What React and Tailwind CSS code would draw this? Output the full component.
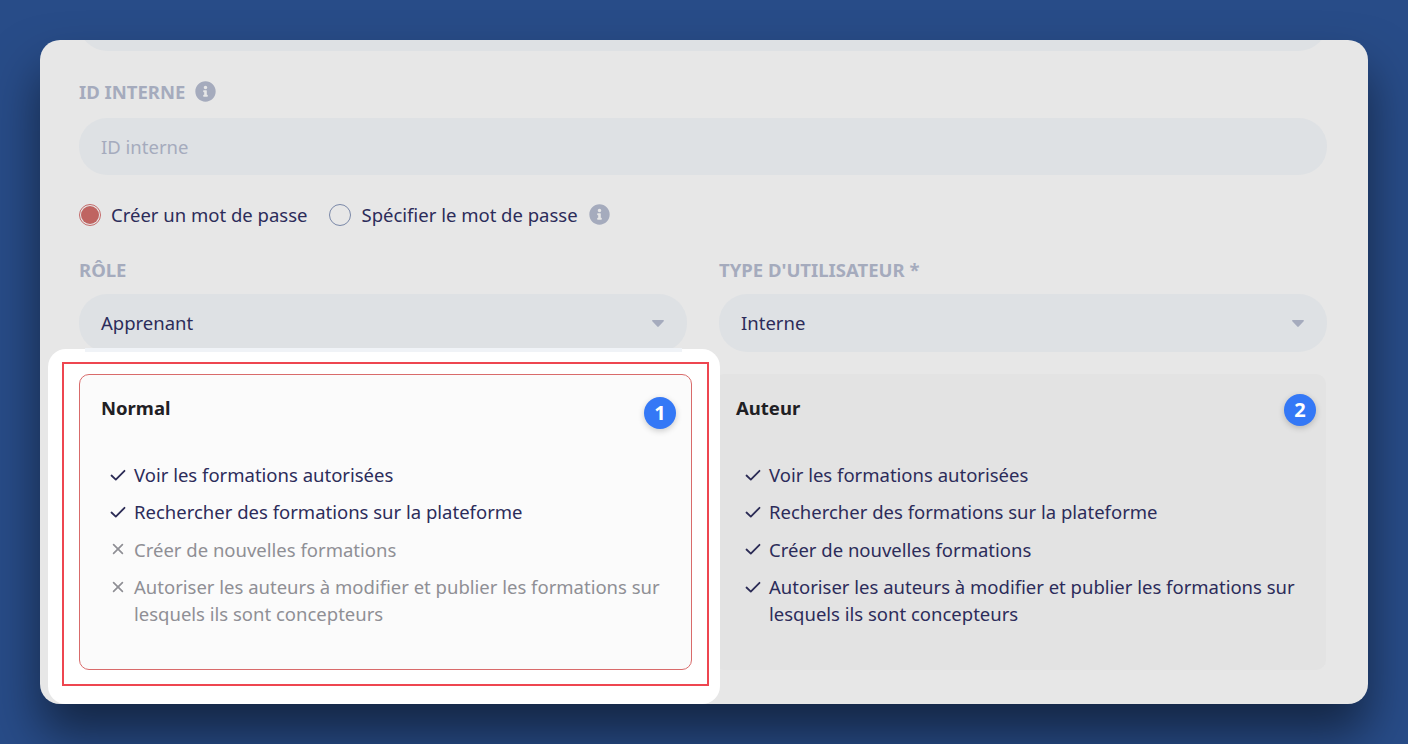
import React from "react";
import { FaInfoCircle } from "react-icons/fa";

const FONT = "font-['Noto_Sans','Open_Sans',sans-serif]";

function Check() {
  return (
    <svg viewBox="0 0 16 12" className="h-[12px] w-[16px]" fill="none" stroke="#2b2b55" strokeWidth="1.8" strokeLinecap="round" strokeLinejoin="round">
      <path d="M1.5 6.5 L5.8 10.6 L14.5 1.8" />
    </svg>
  );
}

function Cross() {
  return (
    <svg viewBox="0 0 12 12" className="h-[12px] w-[12px]" fill="none" stroke="#8f8f95" strokeWidth="1.7" strokeLinecap="round">
      <path d="M1.6 1.6 L10.4 10.4 M10.4 1.6 L1.6 10.4" />
    </svg>
  );
}

function Caret() {
  return (
    <svg viewBox="0 0 12 7" className="h-[7px] w-[12px]" fill="#a5abbd">
      <path d="M0.8 0 H11.2 C11.9 0 12.2 0.8 11.7 1.3 L6.7 6.6 C6.3 7 5.7 7 5.3 6.6 L0.3 1.3 C-0.2 0.8 0.1 0 0.8 0 Z" />
    </svg>
  );
}

function Select({ value }) {
  return (
    <div className="flex h-[58px] items-center justify-between rounded-[28px] bg-[#dee1e4] pl-[22px] pr-[23px] text-[18.5px] text-[#2c2c5a]">
      <span>{value}</span>
      <Caret />
    </div>
  );
}

function Item({ ok, children }) {
  return (
    <li className={`flex items-start text-[18.5px] leading-[27px] ${ok ? "text-[#2c2c5a]" : "text-[#8f8f95]"}`}>
      <span className="flex h-[27px] w-[25px] shrink-0 items-center justify-center pr-[7px]">
        {ok ? <Check /> : <Cross />}
      </span>
      <span>{children}</span>
    </li>
  );
}

function Features({ all }) {
  return (
    <ul className="mt-[41px] flex flex-col gap-[10.4px] pl-[8px]">
      <Item ok>Voir les formations autorisées</Item>
      <Item ok>Rechercher des formations sur la plateforme</Item>
      <Item ok={all}>Créer de nouvelles formations</Item>
      <Item ok={all}>
        Autoriser les auteurs à modifier et publier les formations sur lesquels ils sont concepteurs
      </Item>
    </ul>
  );
}

function Badge({ className, children }) {
  return (
    <span className={`absolute flex h-8 w-8 items-center justify-center rounded-full bg-[#3478f6] text-[20px] font-bold leading-none text-white shadow-[0_2px_6px_rgba(0,0,0,0.2)] ${className}`}>
      {children}
    </span>
  );
}

export default function App() {
  return (
    <div className={`h-[744px] overflow-hidden bg-[#284c88] px-10 pt-10 ${FONT}`}>
      <div className="h-[664px] w-[1328px] overflow-hidden rounded-[20px] bg-[#e7e7e7] pl-[39px] pr-[41px] shadow-[0_30px_50px_rgba(0,0,0,0.5)]">
        <div className="-mt-[45px] h-14 rounded-[28px] bg-[#dee1e4]" />

        <div className="mt-[29px] flex h-6 items-center gap-[10px] text-[18.5px] font-bold text-[#a5abbd]">
          <span>ID INTERNE</span>
          <FaInfoCircle className="-mt-[1px] h-[21px] w-[21px]" />
        </div>

        <div className="mt-[14px] flex h-[57px] items-center rounded-[28px] bg-[#dee1e4] pl-[22px] pt-[1px] text-[18.5px] text-[#a5abbd]">
          ID interne
        </div>

        <div className="mt-[28px] flex h-6 items-center text-[18.5px] text-[#2c2c5a]">
          <span className="flex h-[22px] w-[22px] items-center justify-center rounded-full border border-[#c46a6a]">
            <span className="h-[18px] w-[18px] rounded-full bg-[#bf6461]" />
          </span>
          <span className="ml-[10px]">Créer un mot de passe</span>
          <span className="ml-[22px] h-[22px] w-[22px] rounded-full border border-[#7a88a8]" />
          <span className="ml-[10px]">Spécifier le mot de passe</span>
          <FaInfoCircle className="-mt-[2px] ml-[11px] h-[21px] w-[21px] text-[#a5abbd]" />
        </div>

        <div className="mt-[31px] grid grid-cols-2 gap-x-8">
          <div>
            <div className="h-6 text-[18.5px] font-bold leading-6 text-[#a5abbd]">RÔLE</div>
            <div className="mt-[12px]">
              <Select value="Apprenant" />
            </div>
          </div>
          <div>
            <div className="h-6 text-[18.5px] font-bold leading-6 text-[#a5abbd]">TYPE D'UTILISATEUR *</div>
            <div className="mt-[12px]">
              <Select value="Interne" />
            </div>
          </div>
        </div>

        <div className="mt-[22px] flex gap-[22px]">
          <div className="relative z-10 h-[296px] w-[613px] shrink-0">
            <div className="absolute -bottom-[34px] -left-[31px] -right-[28px] -top-[25px] rounded-[18px] bg-white" />
            <div className="absolute -top-[26px] left-[6px] right-[10px] h-[4px] bg-[#f0f3f7]" />
            <div className="absolute -bottom-[16px] -left-[17px] -right-[17px] -top-[12px] border-2 border-[#ee4650]" />
            <div className="relative h-full rounded-[10px] border border-[#d96b6b] bg-[#fbfbfb] pl-[21px] pr-[20px] pt-[21px]">
              <div className="text-[18.5px] font-bold leading-6 text-[#1f2024]">Normal</div>
              <Features all={false} />
              <Badge className="right-[15px] top-[22px]">1</Badge>
            </div>
          </div>
          <div className="relative h-[296px] w-[612px] shrink-0 rounded-[10px] bg-[#e3e3e3] pl-[22px] pr-[20px] pt-[22px]">
            <div className="text-[18.5px] font-bold leading-6 text-[#1f2024]">Auteur</div>
            <Features all />
            <Badge className="right-[10px] top-[20px]">2</Badge>
          </div>
        </div>
      </div>
    </div>
  );
}
